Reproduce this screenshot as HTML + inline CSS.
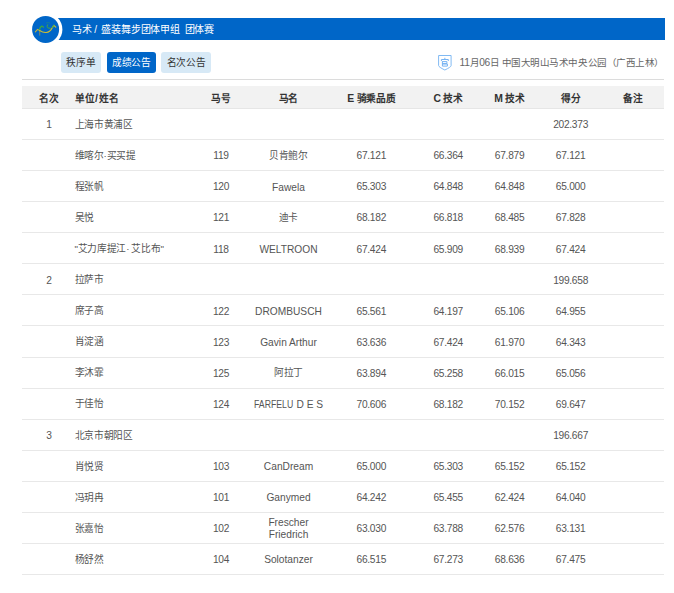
<!DOCTYPE html>
<html lang="zh-CN"><head><meta charset="utf-8"><style>
*{margin:0;padding:0;box-sizing:border-box}
html,body{width:674px;height:593px;background:#fff;overflow:hidden}
body{position:relative;font-family:"Liberation Sans",sans-serif;color:#555;font-size:9.7px;letter-spacing:-0.3px}
.a{position:absolute;white-space:nowrap}
.c{position:absolute;width:120px;text-align:center;white-space:nowrap;line-height:14px}
.n{font-size:10.2px;letter-spacing:-0.28px}
.l{font-size:10.2px;letter-spacing:0px}
.hl{font-size:10.4px;letter-spacing:0}
.ln{position:absolute;left:22px;width:642px;height:1px;background:#e8e8e8}
.btn{position:absolute;top:52px;height:21px;line-height:21px;border-radius:3px;text-align:center;font-size:9.7px}
</style></head><body>

<div class="a" style="left:45px;top:18px;width:619.7px;height:22.3px;background:#0066c8"></div>
<svg class="a" style="left:0;top:0" width="80" height="60" viewBox="0 0 80 60">
<defs><linearGradient id="gy" x1="0" y1="0" x2="0" y2="1"><stop offset="0" stop-color="#3cb43c"/><stop offset="0.6" stop-color="#d8c02a"/><stop offset="1" stop-color="#c9a030"/></linearGradient></defs>
<circle cx="45.6" cy="29.4" r="16.8" fill="#fff"/>
<circle cx="45.6" cy="29.4" r="13.5" fill="#0066c8"/>
<g fill="none" stroke-linecap="round" stroke-linejoin="round">
<path d="M35.3 31.8 L37.6 29.4 L39.6 30.6" stroke="#c4b43a" stroke-width="1.1"/>
<path d="M39.6 30.4 Q39.6 27 41.9 26.1 Q43 26.2 43.4 27.3" stroke="#3fa83e" stroke-width="1.15"/>
<path d="M39.7 30.6 L39.75 35.2" stroke="#c09a38" stroke-width="0.9" opacity="0.75"/>
<path d="M39.6 30.6 Q43 32.8 46.2 32.5 Q50 32.1 51.8 28.5 L53.9 25.3 L55.8 27.1" stroke="#cdbd34" stroke-width="1.15"/>
<path d="M52.6 27.4 L53.9 25.3" stroke="#58b03c" stroke-width="1.15"/>
<path d="M47.6 24.8 Q46.4 26.6 47.6 27.6 Q48.8 28.5 50.4 28.3" stroke="#4aa83e" stroke-width="1"/>
<path d="M46.4 22.9 Q48.2 22.3 49.8 22.9" stroke="#2f9a6a" stroke-width="0.8" opacity="0.6"/>
</g>
</svg>
<div class="a" style="left:72px;top:23px;line-height:14px;color:#fff;font-size:10px;letter-spacing:-0.22px">马术</div>
<div class="a" style="left:94.3px;top:23px;line-height:14px;color:#fff;font-size:10px">/</div>
<div class="a" style="left:101.4px;top:23px;line-height:14px;color:#fff;font-size:10px;letter-spacing:-0.22px">盛装舞步团体甲组</div>
<div class="a" style="left:184.5px;top:23px;line-height:14px;color:#fff;font-size:10px;letter-spacing:-0.22px">团体赛</div>

<div class="btn" style="left:61px;width:40px;background:#d7e9f6;color:#333">秩序单</div>
<div class="btn" style="left:106.5px;width:49.5px;background:#0066c8;color:#fff">成绩公告</div>
<div class="btn" style="left:161px;width:50px;background:#d7e9f6;color:#333">名次公告</div>

<svg class="a" style="left:434px;top:52px" width="22" height="21" viewBox="0 0 22 21">
<path d="M4.6 3.5 H17.1 V13.6 Q17.1 15 10.85 18 Q4.6 15 4.6 13.6 Z" fill="#fff" stroke="#7ab6f2" stroke-width="0.95"/>
<g fill="none" stroke="#70b0f2" stroke-width="0.95">
<path d="M10.85 5.8 V7.2"/>
<path d="M7.4 9 V7.5 H14.3 V9"/>
<path d="M8.4 9.2 V14.1 M8.4 9.6 H12.9 V11.6 H8.4 M8.4 12 H13.4 V14.1 H8.4"/>
</g>
</svg>
<div class="a" style="right:10px;top:55.5px;line-height:14px;color:#666;letter-spacing:-0.45px;font-size:9.5px"><span class="n">11</span>月<span class="n">06</span>日 中国大明山马术中央公园（广西上林）</div>

<div class="a" style="left:22px;top:79px;width:642px;height:1.3px;background:#dcdcdc"></div>
<div class="a" style="left:22px;top:86px;width:642px;height:22.5px;background:#f2f2f2;border-bottom:1px solid #e6e6e6"></div>

<div class="c" style="left:-11.00px;top:91.60px;font-weight:bold;color:#333">名次</div>
<div class="a" style="left:74.5px;top:91.60px;line-height:14px;font-weight:bold;color:#333;letter-spacing:0">单位<span style="margin:0 0.6px;font-size:10.5px;line-height:0">/</span>姓名</div>
<div class="c" style="left:161.00px;top:91.60px;font-weight:bold;color:#333">马号</div>
<div class="c" style="left:228.50px;top:91.60px;font-weight:bold;color:#333">马名</div>
<div class="c" style="left:311.30px;top:91.60px;font-weight:bold;color:#333"><span class="hl">E</span> 骑乘品质</div>
<div class="c" style="left:388.20px;top:91.60px;font-weight:bold;color:#333"><span class="hl">C</span> 技术</div>
<div class="c" style="left:449.60px;top:91.60px;font-weight:bold;color:#333"><span class="hl">M</span> 技术</div>
<div class="c" style="left:510.60px;top:91.60px;font-weight:bold;color:#333">得分</div>
<div class="c" style="left:572.70px;top:91.60px;font-weight:bold;color:#333">备注</div>
<div class="c n" style="left:-11.00px;top:118.23px">1</div>
<div class="a " style="left:74.5px;top:117.83px;line-height:14px">上海市黄浦区</div>
<div class="c n" style="left:510.60px;top:118.23px">202.373</div>
<div class="ln" style="top:139.07px"></div>
<div class="a " style="left:74.5px;top:148.91px;line-height:14px">维喀尔·买买提</div>
<div class="c n" style="left:161.00px;top:149.30px">119</div>
<div class="c " style="left:228.50px;top:148.91px">贝肯鲍尔</div>
<div class="c n" style="left:311.30px;top:149.30px">67.121</div>
<div class="c n" style="left:388.20px;top:149.30px">66.364</div>
<div class="c n" style="left:449.60px;top:149.30px">67.879</div>
<div class="c n" style="left:510.60px;top:149.30px">67.121</div>
<div class="ln" style="top:170.14px"></div>
<div class="a " style="left:74.5px;top:179.97px;line-height:14px">程张帆</div>
<div class="c n" style="left:161.00px;top:180.37px">120</div>
<div class="c l" style="left:228.50px;top:180.57px">Fawela</div>
<div class="c n" style="left:311.30px;top:180.37px">65.303</div>
<div class="c n" style="left:388.20px;top:180.37px">64.848</div>
<div class="c n" style="left:449.60px;top:180.37px">64.848</div>
<div class="c n" style="left:510.60px;top:180.37px">65.000</div>
<div class="ln" style="top:201.21px"></div>
<div class="a " style="left:74.5px;top:211.05px;line-height:14px">吴悦</div>
<div class="c n" style="left:161.00px;top:211.44px">121</div>
<div class="c " style="left:228.50px;top:211.05px">迪卡</div>
<div class="c n" style="left:311.30px;top:211.44px">68.182</div>
<div class="c n" style="left:388.20px;top:211.44px">66.818</div>
<div class="c n" style="left:449.60px;top:211.44px">68.485</div>
<div class="c n" style="left:510.60px;top:211.44px">67.828</div>
<div class="ln" style="top:232.28px"></div>
<div class="a " style="left:74.5px;top:242.12px;line-height:14px">"艾力库提江· 艾比布"</div>
<div class="c n" style="left:161.00px;top:242.51px">118</div>
<div class="c l" style="left:228.50px;top:242.72px">WELTROON</div>
<div class="c n" style="left:311.30px;top:242.51px">67.424</div>
<div class="c n" style="left:388.20px;top:242.51px">65.909</div>
<div class="c n" style="left:449.60px;top:242.51px">68.939</div>
<div class="c n" style="left:510.60px;top:242.51px">67.424</div>
<div class="ln" style="top:263.35px"></div>
<div class="c n" style="left:-11.00px;top:273.58px">2</div>
<div class="a " style="left:74.5px;top:273.19px;line-height:14px">拉萨市</div>
<div class="c n" style="left:510.60px;top:273.58px">199.658</div>
<div class="ln" style="top:294.42px"></div>
<div class="a " style="left:74.5px;top:304.26px;line-height:14px">席子高</div>
<div class="c n" style="left:161.00px;top:304.66px">122</div>
<div class="c l" style="left:228.50px;top:304.86px">DROMBUSCH</div>
<div class="c n" style="left:311.30px;top:304.66px">65.561</div>
<div class="c n" style="left:388.20px;top:304.66px">64.197</div>
<div class="c n" style="left:449.60px;top:304.66px">65.106</div>
<div class="c n" style="left:510.60px;top:304.66px">64.955</div>
<div class="ln" style="top:325.49px"></div>
<div class="a " style="left:74.5px;top:335.32px;line-height:14px">肖淀涵</div>
<div class="c n" style="left:161.00px;top:335.72px">123</div>
<div class="c l" style="left:228.50px;top:335.92px">Gavin Arthur</div>
<div class="c n" style="left:311.30px;top:335.72px">63.636</div>
<div class="c n" style="left:388.20px;top:335.72px">67.424</div>
<div class="c n" style="left:449.60px;top:335.72px">61.970</div>
<div class="c n" style="left:510.60px;top:335.72px">64.343</div>
<div class="ln" style="top:356.56px"></div>
<div class="a " style="left:74.5px;top:366.40px;line-height:14px">李沐霏</div>
<div class="c n" style="left:161.00px;top:366.80px">125</div>
<div class="c " style="left:228.50px;top:366.40px">阿拉丁</div>
<div class="c n" style="left:311.30px;top:366.80px">63.894</div>
<div class="c n" style="left:388.20px;top:366.80px">65.258</div>
<div class="c n" style="left:449.60px;top:366.80px">66.015</div>
<div class="c n" style="left:510.60px;top:366.80px">65.056</div>
<div class="ln" style="top:387.63px"></div>
<div class="a " style="left:74.5px;top:397.46px;line-height:14px">于佳怡</div>
<div class="c n" style="left:161.00px;top:397.86px">124</div>
<div class="c l" style="left:228.50px;top:398.06px"><span style="display:inline-block;width:39.8px;transform:scaleX(0.855);transform-origin:0 0">FARFELU</span> D E S</div>
<div class="c n" style="left:311.30px;top:397.86px">70.606</div>
<div class="c n" style="left:388.20px;top:397.86px">68.182</div>
<div class="c n" style="left:449.60px;top:397.86px">70.152</div>
<div class="c n" style="left:510.60px;top:397.86px">69.647</div>
<div class="ln" style="top:418.70px"></div>
<div class="c n" style="left:-11.00px;top:428.94px">3</div>
<div class="a " style="left:74.5px;top:428.54px;line-height:14px">北京市朝阳区</div>
<div class="c n" style="left:510.60px;top:428.94px">196.667</div>
<div class="ln" style="top:449.77px"></div>
<div class="a " style="left:74.5px;top:459.60px;line-height:14px">肖悦贤</div>
<div class="c n" style="left:161.00px;top:460.00px">103</div>
<div class="c l" style="left:228.50px;top:460.20px">CanDream</div>
<div class="c n" style="left:311.30px;top:460.00px">65.000</div>
<div class="c n" style="left:388.20px;top:460.00px">65.303</div>
<div class="c n" style="left:449.60px;top:460.00px">65.152</div>
<div class="c n" style="left:510.60px;top:460.00px">65.152</div>
<div class="ln" style="top:480.84px"></div>
<div class="a " style="left:74.5px;top:490.68px;line-height:14px">冯玥冉</div>
<div class="c n" style="left:161.00px;top:491.08px">101</div>
<div class="c l" style="left:228.50px;top:491.28px">Ganymed</div>
<div class="c n" style="left:311.30px;top:491.08px">64.242</div>
<div class="c n" style="left:388.20px;top:491.08px">65.455</div>
<div class="c n" style="left:449.60px;top:491.08px">62.424</div>
<div class="c n" style="left:510.60px;top:491.08px">64.040</div>
<div class="ln" style="top:511.91px"></div>
<div class="a " style="left:74.5px;top:521.75px;line-height:14px">张嘉怡</div>
<div class="c n" style="left:161.00px;top:522.15px">102</div>
<div class="c l" style="left:228.50px;top:516.85px;line-height:12.5px">Frescher<br>Friedrich</div>
<div class="c n" style="left:311.30px;top:522.15px">63.030</div>
<div class="c n" style="left:388.20px;top:522.15px">63.788</div>
<div class="c n" style="left:449.60px;top:522.15px">62.576</div>
<div class="c n" style="left:510.60px;top:522.15px">63.131</div>
<div class="ln" style="top:542.98px"></div>
<div class="a " style="left:74.5px;top:552.82px;line-height:14px">杨舒然</div>
<div class="c n" style="left:161.00px;top:553.22px">104</div>
<div class="c l" style="left:228.50px;top:553.42px">Solotanzer</div>
<div class="c n" style="left:311.30px;top:553.22px">66.515</div>
<div class="c n" style="left:388.20px;top:553.22px">67.273</div>
<div class="c n" style="left:449.60px;top:553.22px">68.636</div>
<div class="c n" style="left:510.60px;top:553.22px">67.475</div>
<div class="ln" style="top:574.05px"></div>
</body></html>
